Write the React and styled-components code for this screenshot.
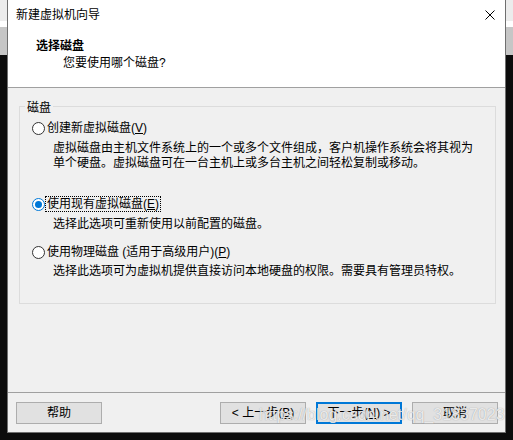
import React from "react";
import styled, { createGlobalStyle } from "styled-components";

const Global = createGlobalStyle`
  html, body { margin: 0; padding: 0; }
  body {
    width: 513px;
    height: 440px;
    overflow: hidden;
    font-family: "Liberation Sans", "Noto Sans CJK SC", sans-serif;
    font-size: 12px;
    color: #000;
  }
`;

const Page = styled.div`
  position: relative;
  width: 513px;
  height: 440px;
  display: flex;
  padding-left: 7px;
  box-sizing: border-box;
  background: linear-gradient(
    to bottom,
    #ececec 0 21px,
    #ffffff 21px 27px,
    #c6c6c6 27px 55px,
    #0c0c0c 55px
  );
`;

const Dialog = styled.div`
  width: 499px;
  height: 433px;
  box-sizing: border-box;
  border: 1px solid #6f6f6f;
  border-top: none;
  background: #f0f0f0;
  display: flex;
  flex-direction: column;
`;

const TitleBar = styled.div`
  height: 30px;
  flex: none;
  background: #fff;
  display: flex;
  align-items: center;
  justify-content: space-between;
  padding: 0 10px 0 8px;
`;

const Title = styled.span`
  font-size: 12px;
  line-height: 16px;
`;

const Header = styled.div`
  height: 57px;
  flex: none;
  box-sizing: content-box;
  background: #fff;
  border-bottom: 1px solid #a0a0a0;
  padding-left: 28px;
  display: flex;
  flex-direction: column;
`;

const Heading = styled.div`
  margin-top: 8px;
  font-weight: bold;
  font-size: 12px;
  line-height: 16px;
`;

const SubHeading = styled.div`
  margin-top: 1px;
  padding-left: 27px;
  font-size: 12px;
  line-height: 16px;
`;

const Body = styled.div`
  flex: 1;
  padding: 9px 9px 0 11px;
`;

const Group = styled.fieldset`
  margin: 0;
  padding: 0 0 24px 0;
  border: 1px solid #dcdcdc;
  min-width: 0;
`;

const Legend = styled.legend`
  margin-left: 5px;
  padding: 4px 2px 0;
  font-size: 12px;
  line-height: 14px;
`;

const RadioRow = styled.div`
  display: flex;
  align-items: center;
  height: 16px;
  padding-left: 12px;
  margin-top: ${(p) => p.$top}px;
`;

const Circle = styled.span`
  width: 13px;
  height: 13px;
  box-sizing: border-box;
  border-radius: 50%;
  border: 1px solid ${(p) => (p.$checked ? "#0078d7" : "#333333")};
  background: #fff;
  display: flex;
  align-items: center;
  justify-content: center;
  flex: none;

  &::after {
    content: "";
    display: ${(p) => (p.$checked ? "block" : "none")};
    width: 7px;
    height: 7px;
    border-radius: 50%;
    background: #0078d7;
  }
`;

const RadioLabel = styled.span`
  padding: 0 1px;
  border: 1px dotted ${(p) => (p.$focus ? "#000" : "transparent")};
  line-height: 14px;
  white-space: pre;
`;

const Mn = styled.span`
  text-decoration: underline;
  text-underline-offset: 1px;
`;

const Desc = styled.div`
  margin-top: ${(p) => p.$top}px;
  padding-left: 33px;
  line-height: 15px;
  white-space: pre;
`;

const Footer = styled.div`
  flex: none;
  border-top: 1px solid #a0a0a0;
  padding: 9px 7px 8px 8px;
  display: flex;
  justify-content: space-between;
`;

const ButtonGroup = styled.div`
  display: flex;
  gap: 10px;
`;

const Button = styled.button`
  width: 86px;
  height: 22px;
  box-sizing: border-box;
  margin: 0;
  padding: 0;
  background: #e1e1e1;
  border: 1px solid ${(p) => (p.$primary ? "#0078d7" : "#adadad")};
  box-shadow: ${(p) => (p.$primary ? "inset 0 0 0 1px #0078d7" : "none")};
  font-family: "Liberation Sans", "Noto Sans CJK SC", sans-serif;
  font-size: 12px;
  line-height: 16px;
  color: #000;
  white-space: pre;
`;

const Watermark = styled.div`
  position: absolute;
  left: 259px;
  top: 405px;
  font-family: "Liberation Sans", sans-serif;
  font-size: 16px;
  line-height: 20px;
  color: rgba(255, 255, 255, 0.8);
  text-shadow: 0 0 1px rgba(90, 90, 90, 0.6);
  pointer-events: none;
  white-space: nowrap;
`;

const CloseIcon = () => (
  <svg width="10" height="10" viewBox="0 0 10 10">
    <path d="M0.5 0.5 L9.5 9.5 M9.5 0.5 L0.5 9.5" stroke="#000" strokeWidth="1" fill="none" />
  </svg>
);

export default function App() {
  return (
    <>
      <Global />
      <Page>
        <Dialog>
          <TitleBar>
            <Title>新建虚拟机向导</Title>
            <CloseIcon />
          </TitleBar>
          <Header>
            <Heading>选择磁盘</Heading>
            <SubHeading>您要使用哪个磁盘?</SubHeading>
          </Header>
          <Body>
            <Group>
              <Legend>磁盘</Legend>
              <RadioRow $top={5}>
                <Circle />
                <RadioLabel>
                  创建新虚拟磁盘(<Mn>V</Mn>)
                </RadioLabel>
              </RadioRow>
              <Desc $top={5}>
                {"虚拟磁盘由主机文件系统上的一个或多个文件组成，客户机操作系统会将其视为\n单个硬盘。虚拟磁盘可在一台主机上或多台主机之间轻松复制或移动。"}
              </Desc>
              <RadioRow $top={25}>
                <Circle $checked />
                <RadioLabel $focus>
                  使用现有虚拟磁盘(<Mn>E</Mn>)
                </RadioLabel>
              </RadioRow>
              <Desc $top={5}>选择此选项可重新使用以前配置的磁盘。</Desc>
              <RadioRow $top={12}>
                <Circle />
                <RadioLabel>
                  使用物理磁盘 (适用于高级用户)(<Mn>P</Mn>)
                </RadioLabel>
              </RadioRow>
              <Desc $top={4}>选择此选项可为虚拟机提供直接访问本地硬盘的权限。需要具有管理员特权。</Desc>
            </Group>
          </Body>
          <Footer>
            <Button>帮助</Button>
            <ButtonGroup>
              <Button>
                {"< 上一步("}<Mn>B</Mn>)
              </Button>
              <Button $primary>
                下一步(<Mn>N</Mn>){" >"}
              </Button>
              <Button>取消</Button>
            </ButtonGroup>
          </Footer>
        </Dialog>
        <Watermark>https://blog.csdn.net/qq_31837023</Watermark>
      </Page>
    </>
  );
}
